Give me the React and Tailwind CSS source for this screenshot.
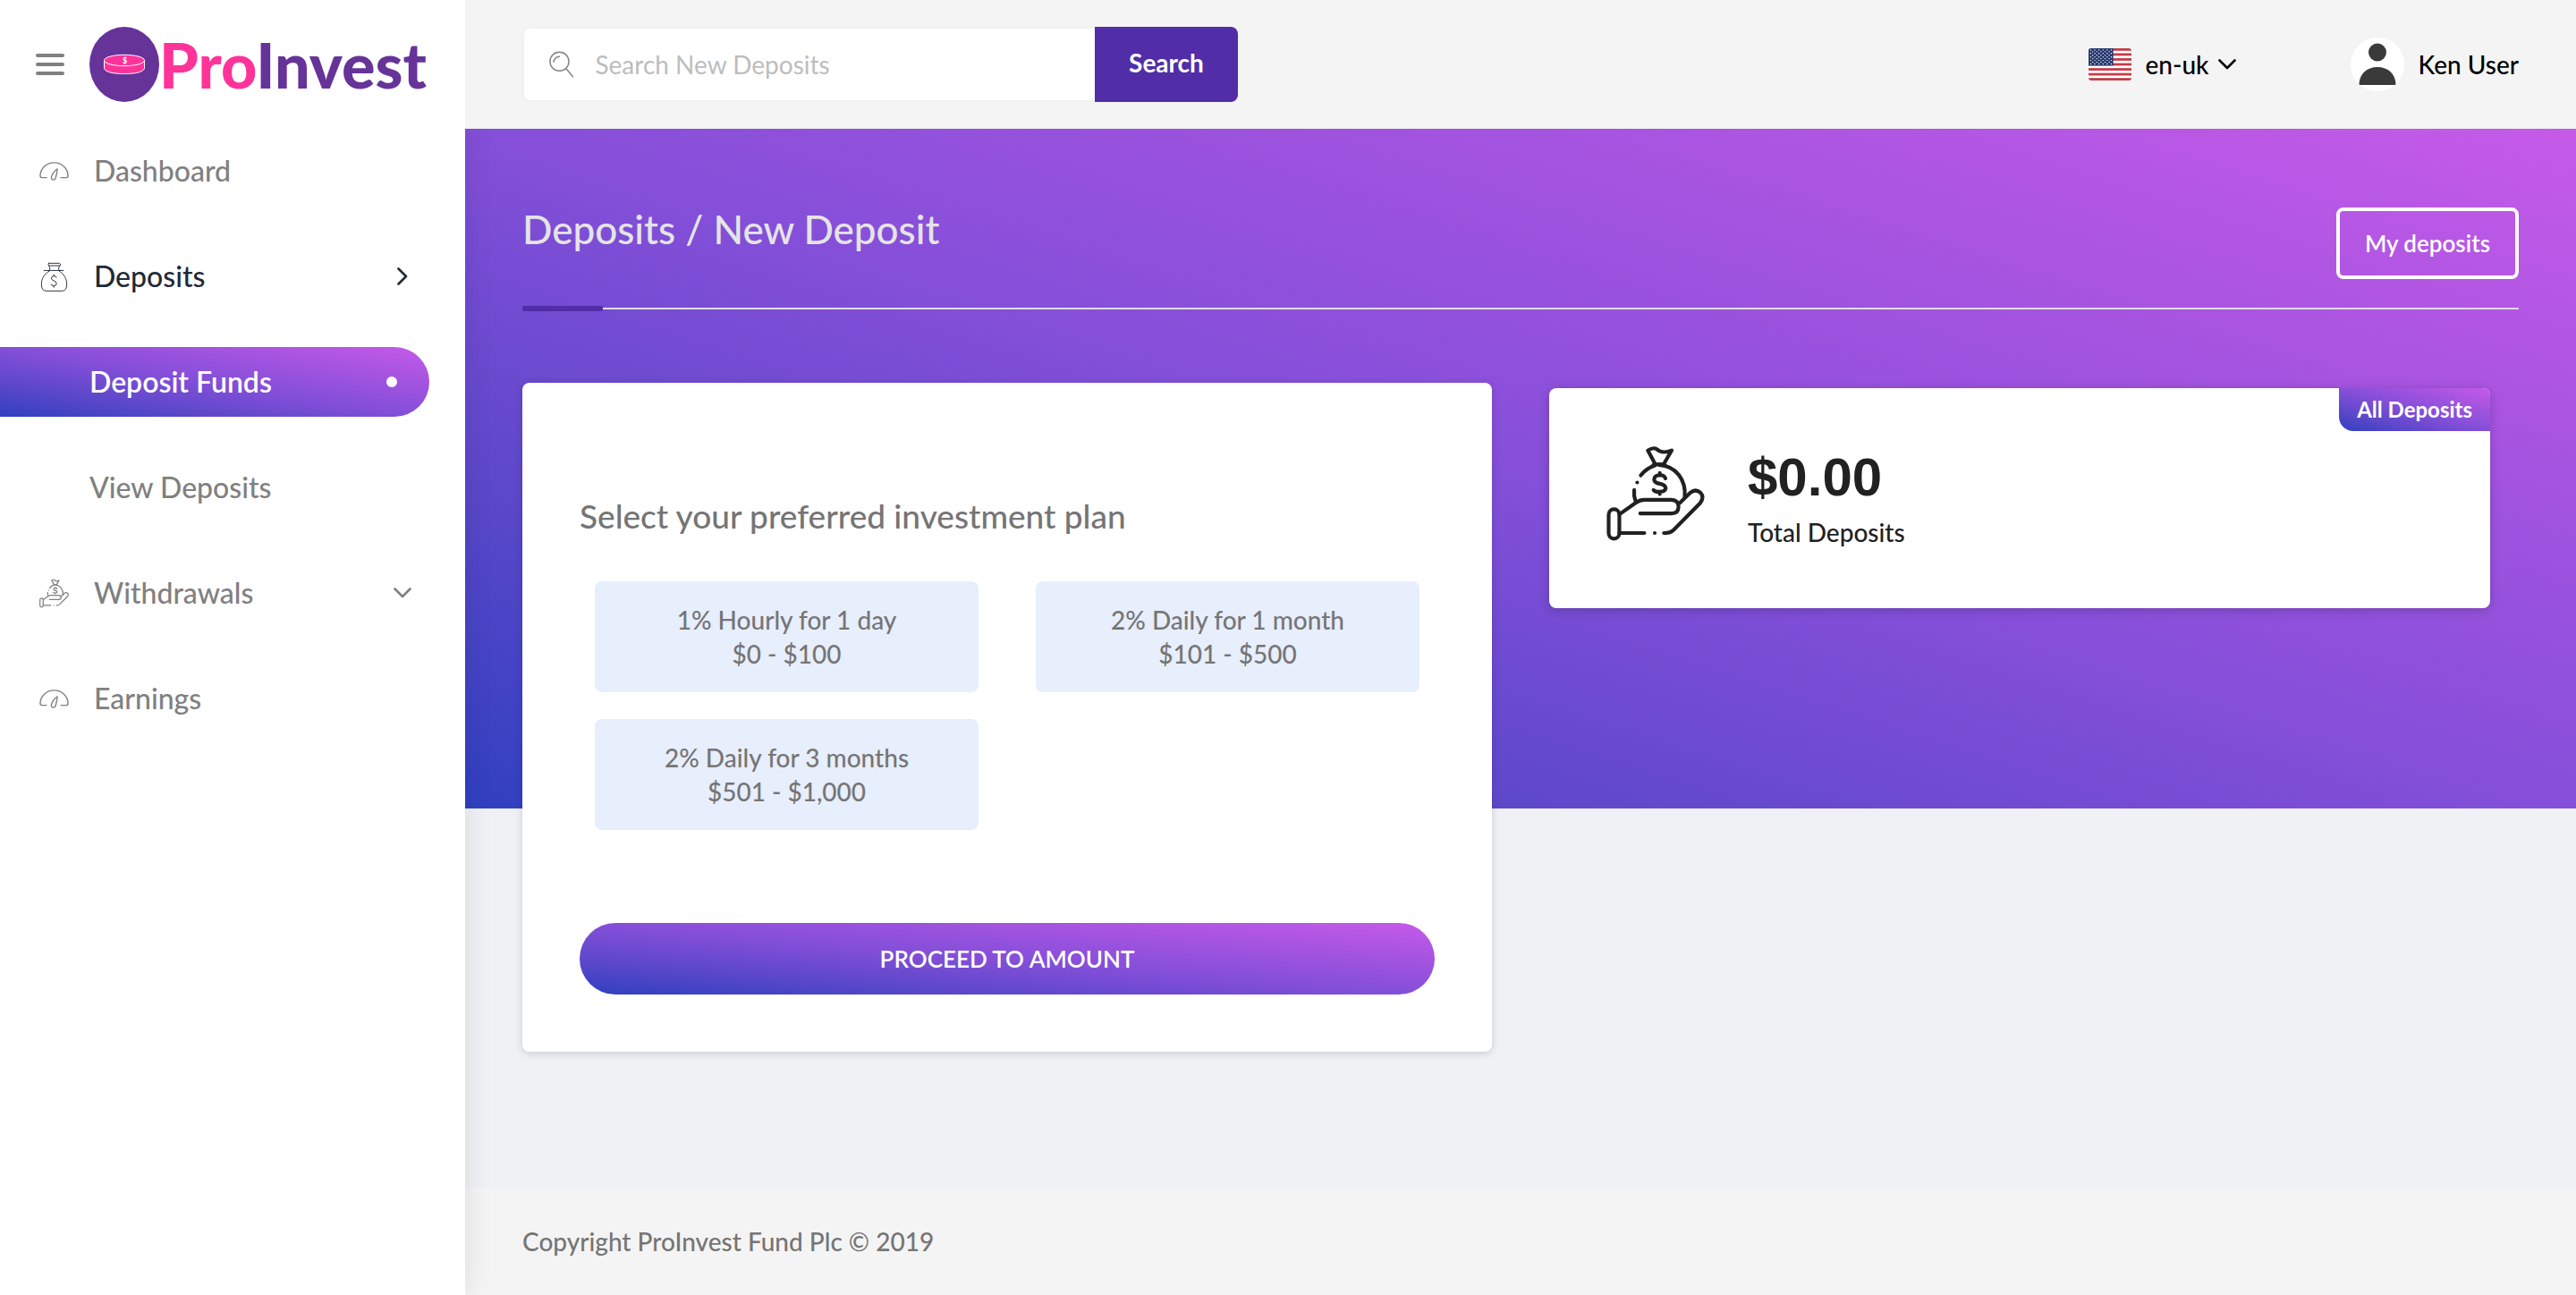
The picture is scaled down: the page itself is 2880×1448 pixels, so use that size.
import { useState } from 'react';

const gradient =
    'bg-[linear-gradient(to_top_right,#3040c0_0%,#5d48ca_25%,#854fd9_50%,#a554e0_75%,#c65ae9_100%)]';

const plans = [
    { id: 1, name: '1% Hourly for 1 day', range: '$0 - $100' },
    { id: 2, name: '2% Daily for 1 month', range: '$101 - $500' },
    { id: 3, name: '2% Daily for 3 months', range: '$501 - $1,000' },
];

function GaugeIcon() {
    return (
        <svg viewBox="0 0 33 21" className="h-[21px] w-[33px]" fill="none" stroke="currentColor" strokeWidth="1.4" strokeLinecap="round">
            <path d="M8 17.6H2.8Q1 17.6 1 15.5A15.5 14.6 0 0 1 32 15.5Q32 17.6 30.2 17.6H24" />
            <path d="M19.8 8C16.5 10.5 13.2 15 13.4 18C14 20.8 17.6 20.8 18.2 17.8C18.7 15 20.6 11 19.8 8Z" />
        </svg>
    );
}

function BagIcon() {
    return (
        <svg viewBox="46 40 90 98" className="h-[33px] w-[33px]" fill="none" stroke="currentColor" strokeWidth="2.8" strokeLinecap="round" strokeLinejoin="round">
            <path d="M73 44H109Q114 46 111 52H74Q69 48 73 44Z" />
            <path d="M74 53Q80 60 76 67M109 53Q103 60 107 67M57 68H122" />
            <path d="M76 69C56 82 49 96 49 114Q49 136 65 136H117Q133 136 133 114C133 96 126 82 107 69" />
            <path d="M99 91Q97 86 90 86Q82 87 82 94Q83 100 90 102Q99 105 99 112Q98 119 90 119Q82 119 81 114M90 82V86M90 119V124" />
        </svg>
    );
}

function HandBagIcon({ className }) {
    return (
        <svg viewBox="48 56 330 322" className={className} fill="none" stroke="currentColor" strokeWidth="12.5" strokeLinecap="round" strokeLinejoin="round">
            <rect x="55" y="271" width="36" height="99" rx="18" />
            <path d="M91 288L148 248Q160 239 175 239H266Q290 240 290 262Q290 285 266 285H161" />
            <path d="M91 351H175M210 351h.1M241 351H247Q262 351 273 341L363 250Q378 230 364 215Q347 201 330 215L294 250" />
            <path d="M225 122C282 126 316 172 311 230M210 124Q182 133 163 157M151 181h.1M141 206Q139 226 145 242" />
            <path d="M210 116L187 73Q205 61 217 69Q235 86 267 73L242 116M205 122Q225 117 245 122" />
            <path d="M246 167Q243 156 227 156Q208 157 208 171Q209 182 227 185Q246 189 247 200Q245 212 227 212Q210 213 206 206M227 149V155M227 213V220" />
        </svg>
    );
}

function Chevron({ className }) {
    return (
        <svg viewBox="0 0 20 12" className={className} fill="none" stroke="currentColor" strokeWidth="2.6" strokeLinecap="round" strokeLinejoin="round">
            <path d="M1.5 1.5L10 10L18.5 1.5" />
        </svg>
    );
}

function Logo() {
    return (
        <a href="#" className="flex items-center whitespace-nowrap" aria-label="ProInvest">
            <svg viewBox="0 0 78 84" className="h-[84px] w-[78px] shrink-0">
                <ellipse cx="39" cy="42" rx="39" ry="42" fill="#663399" />
                <path d="M16.5 37V46.5C18 51 28 52.5 39 52.5S60 51 61.5 46.5V37" fill="#ff3399" stroke="#fff" strokeWidth="1" />
                <ellipse cx="39" cy="37.5" rx="22.5" ry="6.2" fill="#ff3399" stroke="#fff" strokeWidth="1" />
                <text x="39.5" y="40.5" textAnchor="middle" fontSize="9" fontWeight="bold" fontFamily="Lato, sans-serif" fill="#fff">$</text>
            </svg>
            <span className="text-[70px] leading-[80px] font-black text-[#663399]">
                <span className="text-[#ff3399]">Pro</span>Invest
            </span>
        </a>
    );
}

function Flag() {
    return (
        <svg viewBox="0 0 48 36" className="h-9 w-12 rounded-[3px]" preserveAspectRatio="none">
            <rect width="48" height="36" fill="#fff" />
            {[0, 2, 4, 6, 8, 10, 12].map((i) => (
                <rect key={i} y={(i * 36) / 13} width="48" height={36 / 13} fill="#c43c48" />
            ))}
            <rect width="27.6" height="19.4" fill="#26396f" />
            {[0, 1, 2, 3, 4, 5, 6, 7, 8].map((row) =>
                [0, 1, 2, 3, 4, 5].slice(row % 2).map((col) => (
                    <circle key={`${row}-${col}`} cx={2.4 + col * 4.6 - (row % 2) * 2.3} cy={1.9 + row * 1.95} r="0.7" fill="#fff" />
                )),
            )}
        </svg>
    );
}

function Avatar() {
    return (
        <svg viewBox="0 0 60 60" className="h-15 w-15">
            <circle cx="30" cy="30" r="30" fill="#fff" />
            <circle cx="30" cy="16.5" r="10" fill="#3a3a3a" />
            <path d="M9.5 51.5C10 41 18 33 30 33S50 41 50.5 51.5Q50.5 53 49 53H11Q9.5 53 9.5 51.5Z" fill="#3a3a3a" />
        </svg>
    );
}

function Sidebar() {
    return (
        <aside className="relative z-10 w-[520px] shrink-0 bg-white shadow-[0_0_30px_rgba(0,0,0,0.1)]">
            <div className="flex h-36 items-center gap-7 pl-10">
                <button aria-label="Toggle menu" className="flex w-8 shrink-0 flex-col gap-1.5">
                    <span className="h-1 rounded-full bg-[#808080]" />
                    <span className="h-1 rounded-full bg-[#808080]" />
                    <span className="h-1 rounded-full bg-[#808080]" />
                </button>
                <Logo />
            </div>

            <nav className="flex flex-col gap-10 pt-2 pr-10 text-[32px] font-medium text-[#808080]">
                <a href="#" className="flex h-[78px] items-center gap-7 pl-11">
                    <GaugeIcon />
                    Dashboard
                </a>
                <a href="#" className="flex h-[78px] items-center gap-7 pr-5 pl-11 text-[#1f2937]">
                    <BagIcon />
                    Deposits
                    <Chevron className="ml-auto h-3 w-5 -rotate-90" />
                </a>
                <a href="#" className={`flex h-[78px] items-center justify-between rounded-r-full pr-9 pl-[100px] font-semibold text-white ${gradient}`}>
                    Deposit Funds
                    <span className="h-3 w-3 rounded-full bg-white" />
                </a>
                <a href="#" className="flex h-[78px] items-center pl-[100px]">
                    View Deposits
                </a>
                <a href="#" className="flex h-[78px] items-center gap-7 pr-5 pl-11">
                    <HandBagIcon className="h-[33px] w-[33px]" />
                    Withdrawals
                    <Chevron className="ml-auto h-3 w-5" />
                </a>
                <a href="#" className="flex h-[78px] items-center gap-7 pl-11">
                    <GaugeIcon />
                    Earnings
                </a>
            </nav>
        </aside>
    );
}

function TopBar() {
    return (
        <header className="relative z-20 flex h-36 items-center justify-between bg-[#f4f4f4] px-16">
            <form className="flex h-[84px] w-[800px]" onSubmit={(e) => e.preventDefault()}>
                <label className="flex flex-1 items-center gap-6 rounded-l-lg border-2 border-r-0 border-[#f1f1f1] bg-white pl-7">
                    <svg viewBox="0 0 30 32" className="h-8 w-[30px]" fill="none" stroke="#808080" strokeWidth="1.6" strokeLinecap="round">
                        <circle cx="12.5" cy="12.5" r="11.5" />
                        <path d="M5.5 13A7 7 0 0 1 12.5 6.5M20.5 21L29 31" />
                    </svg>
                    <input
                        type="text"
                        aria-label="Search New Deposits"
                        placeholder="Search New Deposits"
                        className="w-full bg-transparent text-[28px] outline-none placeholder:text-[#bdbdbd]"
                    />
                </label>
                <button className="w-40 rounded-r-lg bg-[#512da8] pb-1 text-[28px] font-bold text-white">
                    Search
                </button>
            </form>

            <div className="flex items-center text-[28px] font-medium text-black">
                <Flag />
                <select aria-label="Language" className="relative z-10 mr-[-30px] ml-4 appearance-none bg-transparent pr-[40px] outline-none">
                    <option>en-uk</option>
                </select>
                <Chevron className="h-3 w-5" />
                <a href="#" className="ml-32 flex items-center gap-4">
                    <Avatar />
                    Ken User
                </a>
            </div>
        </header>
    );
}

function PlanForm() {
    const [selected, setSelected] = useState(null);

    return (
        <form
            className="rounded-lg bg-white px-16 pt-31 pb-16 shadow-[0_2px_8px_rgba(0,0,0,0.16)]"
            onSubmit={(e) => e.preventDefault()}
        >
            <h2 className="text-[37px] leading-[50px] font-medium text-[#757575]">
                Select your preferred investment plan
            </h2>

            <div className="mt-12 grid grid-cols-2 gap-x-16 gap-y-[30px] px-[17px]">
                {plans.map((plan) => (
                    <label
                        key={plan.id}
                        className="relative rounded-lg bg-[#e7eefc] py-6 text-center text-[28px] leading-[38px] font-medium text-[#757575] has-checked:ring-2 has-checked:ring-[#512da8]"
                    >
                        <input
                            type="radio"
                            name="plan"
                            className="sr-only"
                            checked={selected === plan.id}
                            onChange={() => setSelected(plan.id)}
                        />
                        {plan.name}
                        <br />
                        {plan.range}
                    </label>
                ))}
            </div>

            <button className={`mt-26 h-20 w-full rounded-full text-[26px] font-semibold text-white ${gradient}`}>
                PROCEED TO AMOUNT
            </button>
        </form>
    );
}

function TotalCard() {
    return (
        <div className="relative flex items-start gap-12 rounded-lg bg-white px-16 pt-16 pb-[66px] text-[#212121] shadow-[0_2px_12px_rgba(0,0,0,0.2)]">
            <HandBagIcon className="h-[107px] w-[110px]" />
            <div className="pt-1.5">
                <p className="font-['Liberation_Sans',Arial,sans-serif] text-6xl leading-[60px] font-bold">$0.00</p>
                <p className="mt-3 text-[28px] leading-[38px] font-medium">Total Deposits</p>
            </div>
            <span className={`absolute top-0 right-0 rounded-tr-lg rounded-bl-2xl px-5 text-2xl leading-12 font-bold text-white ${gradient}`}>
                All Deposits
            </span>
        </div>
    );
}

export default function App() {
    return (
        <div className="flex min-h-screen bg-[#eff1f5] font-[Lato,'Open_Sans',sans-serif]">
            <Sidebar />

            <div className="flex flex-1 flex-col">
                <TopBar />

                <main className="pb-16">
                    {/* Page heading on the gradient */}
                    <section className={`px-16 pt-22 pb-[556px] ${gradient}`}>
                        <div className="flex items-start justify-between">
                            <h1 className="text-[44px] leading-12 font-medium text-[#e4e4e4]">
                                Deposits / New Deposit
                            </h1>
                            <a href="#" className="flex h-20 items-center rounded-lg border-4 border-white px-7 text-[26px] font-semibold text-white">
                                My deposits
                            </a>
                        </div>
                        <div className="mt-[30px] flex items-center">
                            <span className="h-1.5 w-[90px] rounded-xs bg-[#512da8]" />
                            <span className="h-0.5 flex-1 bg-[#e0dce6]" />
                        </div>
                    </section>

                    {/* Cards overlap the gradient */}
                    <div className="relative -mt-[476px] grid grid-cols-2 items-start gap-16 px-16">
                        <PlanForm />
                        <div className="pt-1.5 pr-8">
                            <TotalCard />
                        </div>
                    </div>
                </main>

                <footer className="mt-auto flex h-30 items-center bg-[#f4f4f4] px-16 text-[28px] font-medium text-[#757575]">
                    Copyright ProInvest Fund Plc © 2019
                </footer>
            </div>
        </div>
    );
}
